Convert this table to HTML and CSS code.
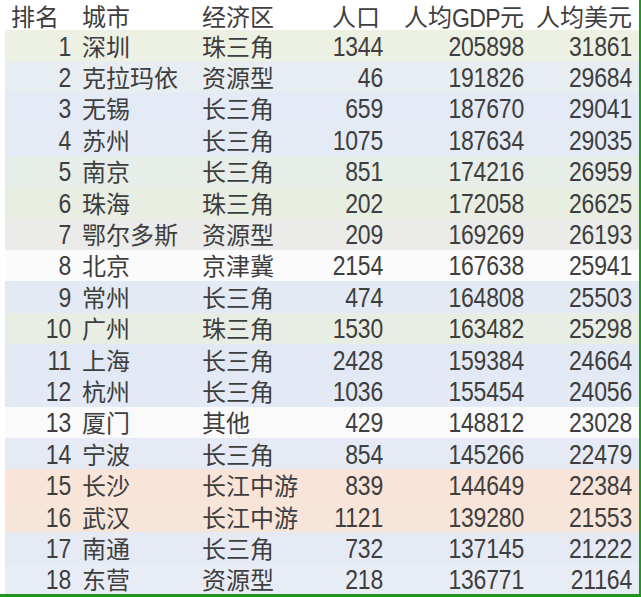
FILE: index.html
```html
<!DOCTYPE html>
<html lang="zh">
<head>
<meta charset="utf-8">
<link rel="stylesheet" href="styles.css">
</head>
<body>
<div class="sheet">
  <div class="row head">
    <div class="c rank zh">排名</div><div class="c city zh">城市</div><div class="c zone zh">经济区</div><div class="c pop zh">人口</div><div class="c gdp zh">人均<span class="lat">GDP</span>元</div><div class="c usd zh">人均美元</div>
  </div>
  <div class="row r1"><div class="c rank num">1</div><div class="c city zh">深圳</div><div class="c zone zh">珠三角</div><div class="c pop num">1344</div><div class="c gdp num">205898</div><div class="c usd num">31861</div></div>
  <div class="row r2"><div class="c rank num">2</div><div class="c city zh">克拉玛依</div><div class="c zone zh">资源型</div><div class="c pop num">46</div><div class="c gdp num">191826</div><div class="c usd num">29684</div></div>
  <div class="row r3"><div class="c rank num">3</div><div class="c city zh">无锡</div><div class="c zone zh">长三角</div><div class="c pop num">659</div><div class="c gdp num">187670</div><div class="c usd num">29041</div></div>
  <div class="row r4"><div class="c rank num">4</div><div class="c city zh">苏州</div><div class="c zone zh">长三角</div><div class="c pop num">1075</div><div class="c gdp num">187634</div><div class="c usd num">29035</div></div>
  <div class="row r5"><div class="c rank num">5</div><div class="c city zh">南京</div><div class="c zone zh">长三角</div><div class="c pop num">851</div><div class="c gdp num">174216</div><div class="c usd num">26959</div></div>
  <div class="row r6"><div class="c rank num">6</div><div class="c city zh">珠海</div><div class="c zone zh">珠三角</div><div class="c pop num">202</div><div class="c gdp num">172058</div><div class="c usd num">26625</div></div>
  <div class="row r7"><div class="c rank num">7</div><div class="c city zh">鄂尔多斯</div><div class="c zone zh">资源型</div><div class="c pop num">209</div><div class="c gdp num">169269</div><div class="c usd num">26193</div></div>
  <div class="row r8"><div class="c rank num">8</div><div class="c city zh">北京</div><div class="c zone zh">京津冀</div><div class="c pop num">2154</div><div class="c gdp num">167638</div><div class="c usd num">25941</div></div>
  <div class="row r9"><div class="c rank num">9</div><div class="c city zh">常州</div><div class="c zone zh">长三角</div><div class="c pop num">474</div><div class="c gdp num">164808</div><div class="c usd num">25503</div></div>
  <div class="row r10"><div class="c rank num">10</div><div class="c city zh">广州</div><div class="c zone zh">珠三角</div><div class="c pop num">1530</div><div class="c gdp num">163482</div><div class="c usd num">25298</div></div>
  <div class="row r11"><div class="c rank num">11</div><div class="c city zh">上海</div><div class="c zone zh">长三角</div><div class="c pop num">2428</div><div class="c gdp num">159384</div><div class="c usd num">24664</div></div>
  <div class="row r12"><div class="c rank num">12</div><div class="c city zh">杭州</div><div class="c zone zh">长三角</div><div class="c pop num">1036</div><div class="c gdp num">155454</div><div class="c usd num">24056</div></div>
  <div class="row r13"><div class="c rank num">13</div><div class="c city zh">厦门</div><div class="c zone zh">其他</div><div class="c pop num">429</div><div class="c gdp num">148812</div><div class="c usd num">23028</div></div>
  <div class="row r14"><div class="c rank num">14</div><div class="c city zh">宁波</div><div class="c zone zh">长三角</div><div class="c pop num">854</div><div class="c gdp num">145266</div><div class="c usd num">22479</div></div>
  <div class="row r15"><div class="c rank num">15</div><div class="c city zh">长沙</div><div class="c zone zh">长江中游</div><div class="c pop num">839</div><div class="c gdp num">144649</div><div class="c usd num">22384</div></div>
  <div class="row r16"><div class="c rank num">16</div><div class="c city zh">武汉</div><div class="c zone zh">长江中游</div><div class="c pop num">1121</div><div class="c gdp num">139280</div><div class="c usd num">21553</div></div>
  <div class="row r17"><div class="c rank num">17</div><div class="c city zh">南通</div><div class="c zone zh">长三角</div><div class="c pop num">732</div><div class="c gdp num">137145</div><div class="c usd num">21222</div></div>
  <div class="row r18"><div class="c rank num">18</div><div class="c city zh">东营</div><div class="c zone zh">资源型</div><div class="c pop num">218</div><div class="c gdp num">136771</div><div class="c usd num">21164</div></div>
</div>
</body>
</html>
```

FILE: styles.css
```css
html, body {
  margin: 0;
  padding: 0;
  background: #ffffff;
}
.sheet {
  width: 639px;
  height: 594px;
  border-right: 2px solid #1f961f;
  border-bottom: 3px solid #1f961f;
  background: #ffffff;
  color: #3e3e3e;
  overflow: hidden;
}
.row {
  display: grid;
  grid-template-columns: 66px 131px 100px 81px 141px 108px;
  height: 31.4px;
  align-items: center;
  margin-left: 5px;
}
.row.head {
  height: 30px;
  background: #ffffff;
  margin-left: 0;
  grid-template-columns: 71px 131px 100px 81px 141px 108px;
}
.c {
  white-space: nowrap;
  line-height: 28px;
}
.zh {
  font-family: "Noto Sans CJK SC", "Noto Sans", sans-serif;
  font-size: 24px;
}
.num {
  font-family: "Liberation Sans", Arial, sans-serif;
  font-size: 23px;
  letter-spacing: -0.2px;
  transform: scaleY(1.22);
}
.lat {
  font-family: "Liberation Sans", Arial, sans-serif;
  font-size: 23px;
  letter-spacing: -0.6px;
  display: inline-block;
  line-height: 24px;
  transform: scaleY(1.12);
}
.rank { text-align: right; }
.city { padding-left: 11px; }
.pop, .gdp, .usd { text-align: right; }
.head .rank { text-align: left; padding-left: 11px; }
.head .pop { padding-right: 3px; }
.head .c { padding-top: 1px; }

.r1 { background: #edf1e4; }
.r2 { background: #e7edf1; }
.r3 { background: #e4eaf6; }
.r4 { background: #e5ebf5; }
.r5 { background: #e7ede8; }
.r6 { background: #e8eee2; }
.r7 { background: #ebecea; }
.r8 { background: #fbfbfb; }
.r9 { background: #e4eaf3; }
.r10 { background: #e8eee4; }
.r11 { background: #e3e9f4; }
.r12 { background: #e3e9f5; }
.r13 { background: #fafafa; }
.r14 { background: #e5eaf4; }
.r15 { background: #f8e4d9; }
.r16 { background: #f7e5da; }
.r17 { background: #e5eaf5; }
.r18 { background: #e8ecf4; }
```
